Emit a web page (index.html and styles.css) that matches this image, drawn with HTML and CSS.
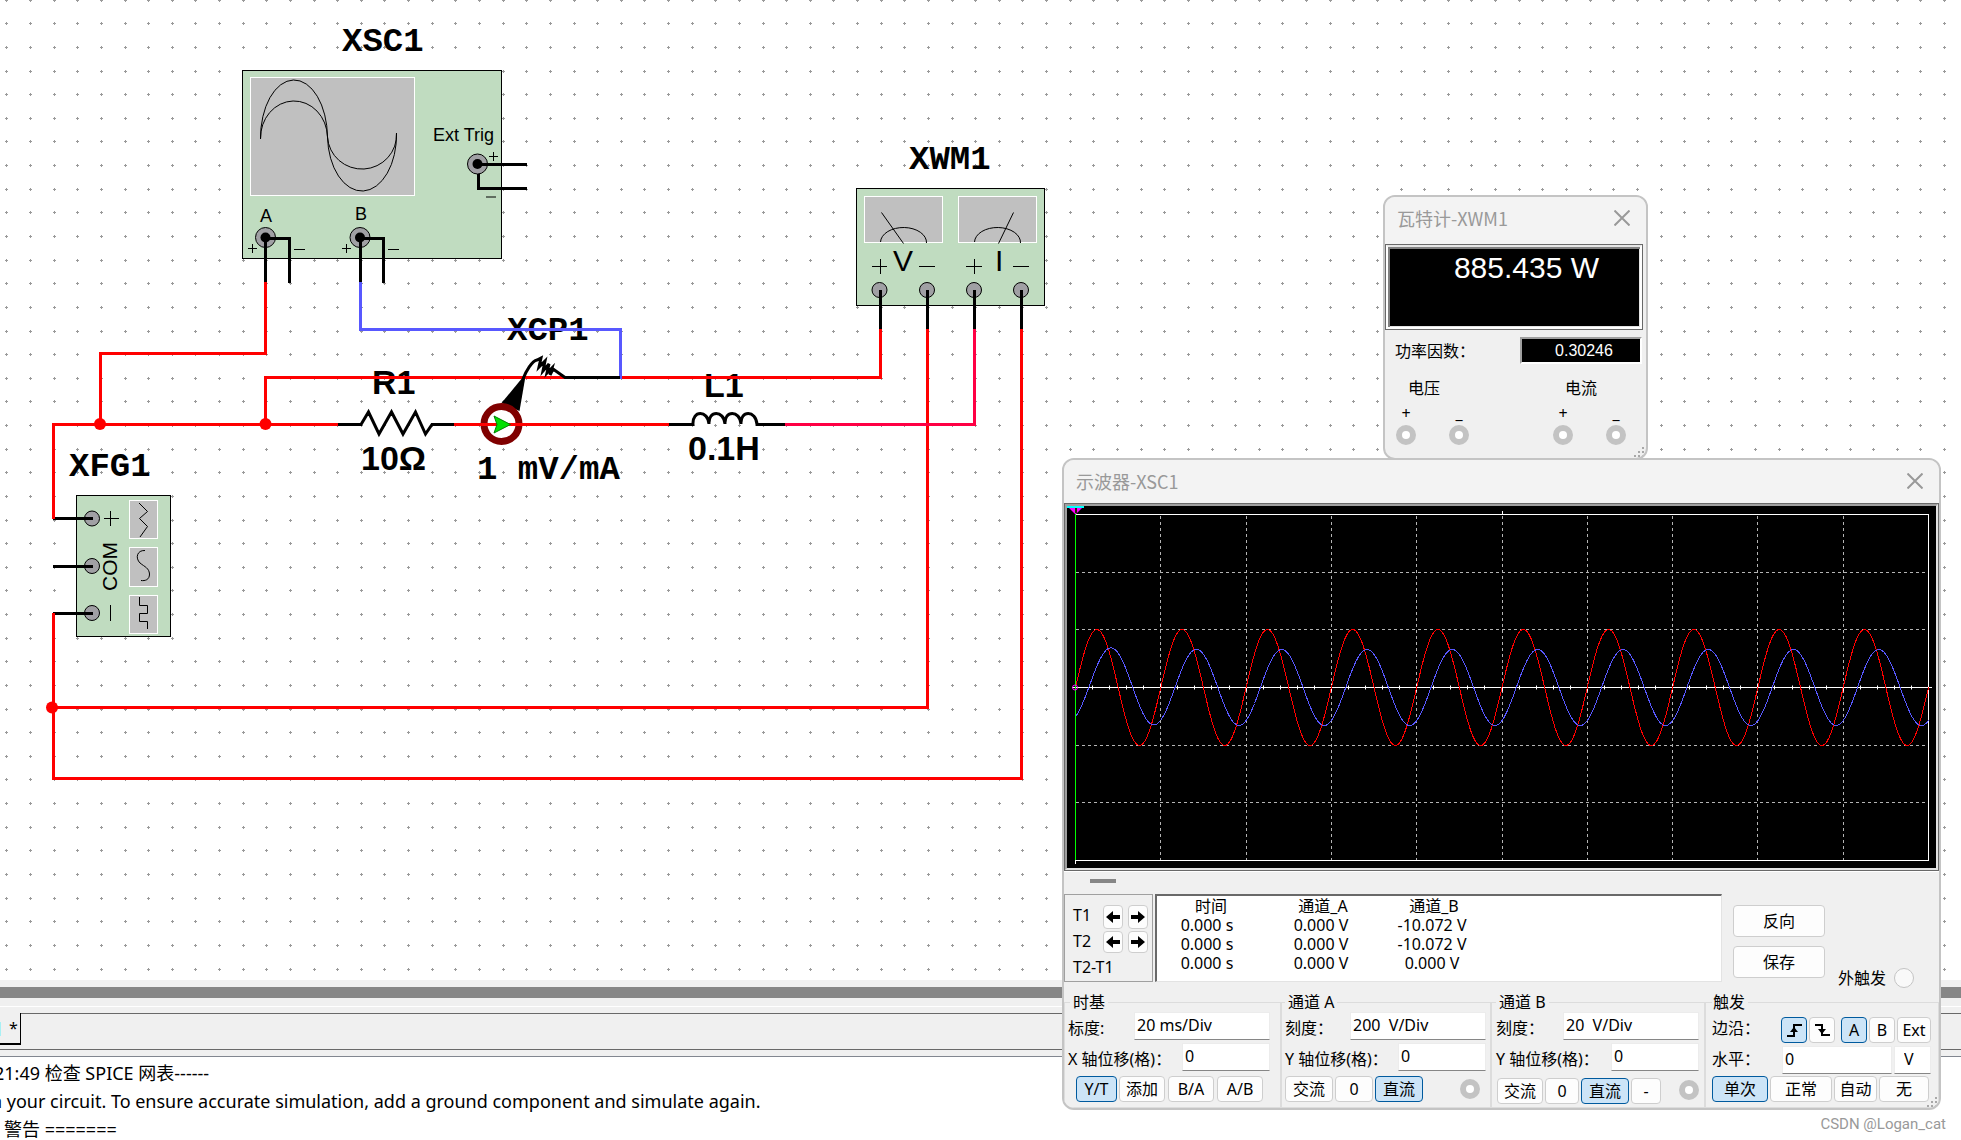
FILE: index.html
```html
<!DOCTYPE html>
<html lang="zh-CN">
<head>
<meta charset="utf-8">
<title>电路仿真</title>
<link rel="stylesheet" href="styles.css">
</head>
<body>
<div class="app">
  <main class="sheet">
    <svg class="schematic" width="1961" height="980">
      <path id="grid" class="grid"/>

      <g class="ref">
        <text x="342" y="51">XSC1</text>
        <text x="69" y="476">XFG1</text>
        <text x="909" y="169">XWM1</text>
        <text x="507" y="340">XCP1</text>
        <text x="477" y="479">1 mV/mA</text>
      </g>
      <g class="value">
        <text x="372" y="394">R1</text>
        <text x="361" y="470">10Ω</text>
        <text x="704" y="397">L1</text>
        <text x="688" y="460">0.1H</text>
      </g>

      <!-- oscilloscope -->
      <g>
        <rect class="body" x="242.5" y="70.5" width="259" height="188"/>
        <rect class="screen" x="250.5" y="77.5" width="164" height="118"/>
        <path class="thin" d="M260.5 139A33.5 58 0 0 1 327.5 137A34.5 56 0 0 0 396.500 133M260.500 139A33.500 37 0 0 1 327.500 137A34.500 34 0 0 0 396.500 133"/>
        <g class="small">
          <text x="433" y="141">Ext Trig</text>
          <text x="260" y="222">A</text>
          <text x="355" y="220">B</text>
        </g>
        <g class="jack"><circle cx="265.500" cy="237.500" r="10"/><circle cx="360" cy="237.500" r="10"/><circle cx="477.500" cy="164" r="10"/></g>
        <g class="core"><circle cx="265.500" cy="237.500" r="5"/><circle cx="360" cy="237.500" r="5"/><circle cx="477.500" cy="164" r="5"/></g>
        <path class="pin" d="M265.500 238V282M265.500 238.500H289.500V283M360.500 238V282M360.500 238.500H383.500V283M477.500 164.500H527M478.500 174V188.500H527"/>
        <path class="sign" d="M248 248.500h9M252.500 244v9M294 249.500h11M342 248.500h9M346.500 244v9M388 249.500h11M489 156.500h9M493.500 152v9M486 197h10"/>
      </g>

      <!-- function generator -->
      <g>
        <rect class="body" x="76.500" y="495.500" width="94" height="141"/>
        <rect class="screen" x="129.500" y="500.500" width="28" height="38"/>
        <rect class="screen" x="129.500" y="547.500" width="28" height="39"/>
        <rect class="screen" x="129.500" y="595.500" width="28" height="38"/>
        <path class="thin" d="M139 503L147.500 511.500L139.500 518.500L147.500 526.500L140 537M145 550.500C137 550 135 558 140 563C145 567 149 568 149.500 574C149.500 580 145 581 141 580.500M139.500 597V605.500H147.500V613.500H139.500V621.500H147.500V629M104 518.500h15M110.500 511v15M110.500 605v16"/>
        <g class="jack"><circle cx="92" cy="518.500" r="7.500"/><circle cx="92" cy="566" r="7.500"/><circle cx="92" cy="613" r="7.500"/></g>
        <path class="pin" d="M53 518.500H93M53 566.500H93M53 613.500H93"/>
        <text class="com" transform="translate(117 591) rotate(-90)">COM</text>
      </g>

      <!-- wattmeter -->
      <g>
        <rect class="body" x="856.500" y="188.500" width="188" height="117"/>
        <rect class="screen" x="864.500" y="196.500" width="78" height="46"/>
        <rect class="screen" x="958.500" y="196.500" width="78" height="46"/>
        <path class="thin" d="M881.500 212.500L903.500 243.500M880.500 242A23 15 0 0 1 926.500 243M1013.500 212.500L998.500 243.500M974.500 242A23 15 0 0 1 1020.500 243M872 266.500h15M880.500 259v15M919 266.500h16M966 266.500h16M974.500 259v15M1013 266.500h16"/>
        <g class="meter"><text x="893" y="271">V</text><text x="995" y="271">I</text></g>
        <g class="jack"><circle cx="879.500" cy="290" r="7.500"/><circle cx="927" cy="290" r="7.500"/><circle cx="974" cy="290" r="7.500"/><circle cx="1021" cy="290" r="7.500"/></g>
        <path class="pin" d="M880.500 290V329M927.500 290V329M974.500 290V329M1021.500 290V329"/>
      </g>

      <!-- wires -->
      <path class="wire hot" d="M265.500 282V353.500H100.500V424.500M53.500 519V424.500H338M265.500 424.500V377.500H880.500V329M53.500 613V778.500H1021.500V329M53.500 707.500H927.500V329"/>
      <path class="wire pink" d="M785 424.500H974.500V329"/>
      <path class="wire probe" d="M360.500 282V329.500H620.500V379"/>
      <g class="node"><circle cx="100" cy="424" r="6"/><circle cx="265.500" cy="424" r="6"/><circle cx="52" cy="707.500" r="6"/></g>

      <!-- resistor and inductor -->
      <path class="pin" d="M338 424.500H361L368.500 412L379 434L391.500 412L403 434L415.500 412L425.500 434L432 424.500H454M669 424.500H693C692 410 708 410 709 424C708 410 724 410 725 424C724 410 740 410 741 424C740 410 756 410 757 424.500H785"/>

      <!-- current probe -->
      <path d="M523 377L501.500 403L519.500 411L525 379Z"/>
      <path class="pin" d="M523 379C526 371 532 361 537 360L541 358L539 367L545 361L543 371L549 364L547 373L552 368L550 375L553 369L565 377.500H620"/>
      <circle class="ring" cx="501.500" cy="424" r="17.500"/>
      <path class="wire hot" d="M454 424.500H669"/>
      <path class="arrow" d="M494 416L510.500 424.500L494 433L497 424.500Z"/>
    </svg>
  </main>

  <footer class="dock">
    <div class="splitter"></div>
    <div class="tabs"><button class="tab" type="button">*</button></div>
    <div class="log">
      <p class="log-time">21:49 检查 SPICE 网表------</p>
      <p class="log-note">n your circuit. To ensure accurate simulation, add a ground component and simulate again.</p>
      <p class="log-warn">警告 =======</p>
    </div>
  </footer>

  <section class="window watt">
    <header class="titlebar"><h2>瓦特计-XWM1</h2>
      <button class="close" type="button" aria-label="关闭"><svg width="16" height="16"><path d="M0.500 0.500L15.500 15.500M15.500 0.500L0.500 15.500"/></svg></button></header>
    <output class="power">885.435 W</output>
    <div class="factor"><label for="pf">功率因数：</label><output id="pf">0.30246</output></div>
    <div class="terminals">
      <div class="pair"><span class="pair-name">电压</span>
        <label>+<input type="radio" name="vp" checked disabled></label>
        <label>_<input type="radio" name="vn" checked disabled></label></div>
      <div class="pair"><span class="pair-name">电流</span>
        <label>+<input type="radio" name="ip" checked disabled></label>
        <label>_<input type="radio" name="in" checked disabled></label></div>
    </div>
    <svg class="grip" width="11" height="11"><path d="M8 0h2v2h-2zM4 4h2v2h-2zM8 4h2v2h-2zM0 8h2v2h-2zM4 8h2v2h-2zM8 8h2v2h-2z"/></svg>
  </section>

  <section class="window scope">
    <header class="titlebar"><h2>示波器-XSC1</h2>
      <button class="close" type="button" aria-label="关闭"><svg width="16" height="16"><path d="M0.500 0.500L15.500 15.500M15.500 0.500L0.500 15.500"/></svg></button></header>
    <div class="bezel">
      <svg class="trace" viewBox="0 0 869 362">
        <path class="divs" d="M93.500 10V354M179.500 10V354M264.500 10V354M349.500 10V354M435.500 10V354M520.500 10V354M605.500 10V354M690.500 10V354M776.500 10V354M9 66.500H861M9 123.500H861M9 239.500H861M9 296.500H861"/>
        <path class="frame" d="M8 8.500H861M861.500 8V355M8 354.500H862M8.500 354V358M435.500 5V9M5 181.500H865"/>
        <path id="ticks" class="frame"/>
        <path id="wave-a" class="wave-a"/>
        <path id="wave-b" class="wave-b"/>
        <path class="cursor" d="M8.500 8V354"/>
        <path class="cursor-top" d="M0 0H17V2H0Z"/>
        <path class="cursor-head" d="M2 2H15L9 8H8Z"/>
        <path class="cursor-one" d="M8 2h2v5h-2z"/>
        <circle class="cursor-dot" cx="8" cy="181.500" r="2.500"/>
      </svg>
    </div>
    <div class="slider"><span></span></div>
    <div class="measure">
      <div class="cursors">
        <span>T1</span><button type="button" aria-label="T1 左移"><svg width="14" height="12"><path d="M0 6L7 0V4H14V8H7V12Z"/></svg></button><button type="button" aria-label="T1 右移"><svg width="14" height="12"><path d="M14 6L7 0V4H0V8H7V12Z"/></svg></button>
        <span>T2</span><button type="button" aria-label="T2 左移"><svg width="14" height="12"><path d="M0 6L7 0V4H14V8H7V12Z"/></svg></button><button type="button" aria-label="T2 右移"><svg width="14" height="12"><path d="M14 6L7 0V4H0V8H7V12Z"/></svg></button>
        <span class="delta">T2-T1</span>
      </div>
      <div class="readout">
        <table>
          <thead><tr><th>时间</th><th>通道_A</th><th>通道_B</th></tr></thead>
          <tbody>
            <tr><td>0.000 s</td><td>0.000 V</td><td>-10.072 V</td></tr>
            <tr><td>0.000 s</td><td>0.000 V</td><td>-10.072 V</td></tr>
            <tr><td>0.000 s</td><td>0.000 V</td><td>0.000 V</td></tr>
          </tbody>
        </table>
      </div>
      <div class="actions"><button type="button">反向</button><button type="button">保存</button></div>
      <label class="ext">外触发<input type="radio" name="ext" disabled></label>
    </div>
    <form class="groups">
      <fieldset class="base"><legend>时基</legend>
        <div class="row"><label for="tb">标度:</label><input id="tb" class="wide" value="20 ms/Div"></div>
        <div class="row"><label for="tx">X 轴位移(格)：</label><input id="tx" class="short" value="0"></div>
        <div class="keys"><button type="button" class="on w41">Y/T</button><button type="button" class="w46">添加</button><button type="button" class="w46">B/A</button><button type="button" class="w46">A/B</button></div>
      </fieldset>
      <fieldset class="cha"><legend>通道 A</legend>
        <div class="row"><label for="as">刻度：</label><input id="as" class="wide" value="200  V/Div"></div>
        <div class="row"><label for="ay">Y 轴位移(格)：</label><input id="ay" class="short" value="0"></div>
        <div class="keys"><button type="button" class="w48">交流</button><button type="button" class="w38">0</button><button type="button" class="on w48">直流</button><input type="radio" name="cha" checked disabled aria-label="通道 A"></div>
      </fieldset>
      <fieldset class="chb"><legend>通道 B</legend>
        <div class="row"><label for="bs">刻度：</label><input id="bs" class="wide" value="20  V/Div"></div>
        <div class="row"><label for="by">Y 轴位移(格)：</label><input id="by" class="short" value="0"></div>
        <div class="keys"><button type="button" class="w46">交流</button><button type="button" class="w34">0</button><button type="button" class="on w48">直流</button><button type="button" class="w30">-</button><input type="radio" name="chb" checked disabled aria-label="通道 B"></div>
      </fieldset>
      <fieldset class="trig"><legend>触发</legend>
        <div class="row"><span>边沿：</span>
          <div class="edges"><button type="button" class="on" aria-label="上升沿"><svg width="15" height="13"><path class="edge" d="M0 12H7V1H15"/><path d="M3 8L7 3L11 8Z"/></svg></button><button type="button" aria-label="下降沿"><svg width="15" height="13"><path class="edge" d="M0 1H7V11H15"/><path d="M3 5L7 10L11 5Z"/></svg></button><button type="button" class="on src">A</button><button type="button" class="src-b">B</button><button type="button" class="w34">Ext</button></div></div>
        <div class="row"><label for="lv">水平：</label><input id="lv" class="level" value="0"><input class="unit" aria-label="单位" value="V"></div>
        <div class="keys"><button type="button" class="on w56">单次</button><button type="button" class="w62">正常</button><button type="button" class="w43">自动</button><button type="button" class="w50">无</button></div>
      </fieldset>
    </form>
    <svg class="grip" width="11" height="11"><path d="M8 0h2v2h-2zM4 4h2v2h-2zM8 4h2v2h-2zM0 8h2v2h-2zM4 8h2v2h-2zM8 8h2v2h-2z"/></svg>
  </section>
  <p class="credit">CSDN @Logan_cat</p>
</div>
<script src="plot.js"></script>
</body>
</html>
```
FILE: styles.css
```css
* { box-sizing: border-box; }
body {
  margin: 0;
  background: #fff;
  color: #000;
  font: 16px/20px "Noto Sans", "Noto Sans CJK SC", sans-serif;
}
h2, p { margin: 0; font-weight: 400; }
button, input { font: inherit; color: inherit; }

.app {
  position: relative;
  display: flex;
  flex-direction: column;
  min-height: 100vh;
  overflow: hidden;
}
.sheet { flex: 1; overflow: hidden; }
.schematic { display: block; }

/* schematic */
.grid { stroke: #9a9a9a; fill: none; shape-rendering: crispEdges; }
.ref { font: bold 34px "Liberation Mono", "Courier New", monospace; }
.value { font: bold 34px "Liberation Sans", Arial, sans-serif; }
.small { font: 18px "Liberation Sans", Arial, sans-serif; }
.com { font: 21px "Liberation Sans", Arial, sans-serif; }
.meter { font: 30px "Liberation Sans", Arial, sans-serif; }
.body { fill: #c0dcc0; stroke: #000; }
.screen { fill: #c0c0c0; stroke: #fff; }
.thin { fill: none; stroke: #000; }
.sign { fill: none; stroke: #000; }
.pin { fill: none; stroke: #000; stroke-width: 3; }
.jack { fill: #a0a0a4; stroke: #000; }
.wire { fill: none; stroke-width: 3; }
.hot { stroke: #f00; }
.pink { stroke: #ff0044; }
.probe { stroke: #5858ff; }
.node { fill: #f00; }
.ring { fill: #fff; stroke: #800000; stroke-width: 7; }
.arrow { fill: #00e000; stroke: #008000; }

/* bottom dock */
.dock { background: #f0f0f0; }
.splitter {
  height: 26px;
  border: solid #f0f0f0;
  border-width: 7px 0 8px;
  background: #868686;
}
.tabs {
  display: flex;
  align-items: flex-start;
  height: 44px;
  margin-bottom: 6px;
  padding-top: 6px;
  border-top: 1px solid #fff;
  border-bottom: 1px solid #696969;
}
.tabs::after { content: ""; flex: 1; border-top: 1px solid #696969; }
.tab {
  width: 21px;
  height: 32px;
  padding: 0 0 0 7px;
  border: solid #000;
  border-width: 0 1px 2px 0;
  background: linear-gradient(#a8f0f4, #a8f0f4) 0 9px / 1px 14px no-repeat #f0f0f0;
}
.log {
  height: 84px;
  padding-top: 2px;
  overflow: hidden;
  border-top: 1px solid #828790;
  background: #fff;
  font-size: 18px;
  line-height: 28px;
  white-space: nowrap;
}
.log-time { margin-left: -6px; }
.log-note { margin-left: -9px; }
.log-warn { margin-left: 4px; }
.credit {
  position: absolute;
  right: 15px;
  bottom: 6px;
  color: #999;
  font: 15px/20px Roboto, sans-serif;
}

/* instrument windows */
.window {
  position: absolute;
  border: 2px solid #c4c4c4;
  border-radius: 12px;
  overflow: hidden;
  background: #f0f0f0;
}
.watt { left: 1383px; top: 195px; width: 265px; height: 265px; }
.scope { left: 1062px; top: 458px; width: 879px; }
.titlebar {
  display: flex;
  align-items: center;
  justify-content: space-between;
  height: 43px;
  padding: 0 16px 2px 12px;
  background: #f3f3f3;
  color: #999;
}
.titlebar h2 { font: 18px/24px "Noto Sans CJK SC", sans-serif; }
.close { display: flex; padding: 0; border: 0; background: none; }
.close path { stroke: #999; stroke-width: 2; fill: none; }
.grip { position: absolute; right: 1px; bottom: 0; fill: #a8a8a8; }

.watt .titlebar { height: 47px; padding-bottom: 6px; }
.power {
  display: block;
  width: 258px;
  height: 86px;
  padding-right: 41px;
  border: 3px solid #fff;
  border-top-color: #e6e6e6;
  outline: 1px solid #696969;
  outline-offset: -1px;
  box-shadow: inset 2px 2px #808080, inset -1px -1px #e3e3e3;
  background: #000;
  color: #fff;
  font: 30px/42px "Liberation Sans", Arial, sans-serif;
  text-align: right;
}
.factor {
  display: flex;
  align-items: center;
  justify-content: space-between;
  margin: 7px 4px 12px 10px;
}
.factor output {
  width: 122px;
  height: 27px;
  border: 2px solid;
  border-color: #a0a0a0 #fff #fff #a0a0a0;
  background: #000;
  color: #fff;
  font: 16px/24px "Liberation Sans", Arial, sans-serif;
  text-align: center;
  padding-left: 6px;
}
.terminals { display: flex; justify-content: space-between; padding: 0 20px 0 11px; }
.pair { display: grid; grid-template-columns: 20px 20px; column-gap: 33px; }
.pair-name { grid-column: 1 / 3; padding-left: 12px; line-height: 24px; }
.pair label {
  display: flex;
  flex-direction: column;
  align-items: center;
  padding-top: 2px;
  line-height: 23px;
}
input[type="radio"] {
  appearance: none;
  width: 20px;
  height: 20px;
  margin: 0;
  border: 1px solid #c4c4c4;
  border-radius: 50%;
  background: #f9f9f9;
}
input[type="radio"]:checked { border: 6px solid #c3c3c3; background: #fff; }

/* oscilloscope */
.bezel {
  border: 1px solid #696969;
  box-shadow: 0 1px #fff;
  background: #fff;
}
.trace {
  display: block;
  width: 873px;
  border: solid;
  border-width: 2px;
  border-color: #a0a0a0 #e3e3e3 #e3e3e3 #a0a0a0;
  background: #000;
  fill: none;
}
.divs { stroke: #b4b4b4; stroke-dasharray: 3 3; }
.frame { stroke: #fff; }
.wave-a, .wave-b { shape-rendering: crispEdges; }
.wave-a { stroke: #f00; }
.wave-b { stroke: #5858ff; }
.cursor { stroke: #0f0; }
.cursor-top { fill: #0ff; }
.cursor-head { fill: #f0f; }
.cursor-one { fill: #220; }
.cursor-dot { stroke: #f0f; }
.slider { height: 23px; padding: 8px 26px; }
.slider span { display: block; width: 26px; height: 4px; background: #868686; }

.window button:not(.close) {
  display: flex;
  align-items: center;
  justify-content: center;
  padding: 0;
  border: 1px solid #cecece;
  border-radius: 4px;
  background: #fdfdfd;
}
.window button.on { border-color: #005a9e; background: #cce4f7; }
.measure { display: flex; height: 88px; }
.cursors {
  display: grid;
  grid-template-columns: 25px 20px 20px;
  grid-template-rows: 24px 22px 24px;
  column-gap: 5px;
  row-gap: 2px;
  align-content: start;
  width: 89px;
  margin-right: 2px;
  padding: 10px 0 0 8px;
  border: 1px solid #a0a0a0;
}
.cursors .delta { grid-column: 1 / 4; line-height: 24px; }
.readout {
  width: 567px;
  padding-top: 1px;
  border: solid;
  border-width: 2px 1px 1px 2px;
  border-color: #696969 #e3e3e3 #e3e3e3 #696969;
  background: #fff;
}
.readout table { border-collapse: collapse; table-layout: fixed; width: 326px; }
.readout th, .readout td {
  width: 98px;
  padding: 0;
  font-weight: 400;
  line-height: 19px;
  text-align: center;
  white-space: nowrap;
}
.readout td { padding-right: 4px; }
.readout th:nth-child(1) { width: 104px; padding-left: 4px; }
.readout th:nth-child(2) { width: 124px; }
.actions { display: flex; flex-direction: column; gap: 9px; padding: 11px 0 0 11px; }
.actions button { width: 92px; height: 32px; }
.ext { display: flex; gap: 8px; align-self: flex-end; margin: 0 0 -6px 13px; }

.groups {
  display: grid;
  grid-template-columns: 217fr 210fr 214fr 234fr;
  margin-top: 10px;
}
fieldset {
  min-width: 0;
  height: 116px;
  margin: 0;
  padding: 0 10px 0 3px;
  border: 1px solid #dcdcdc;
}
legend { margin-left: 2px; padding: 0 3px; }
.cha { padding-right: 4px; }
.cha legend, .chb legend { margin-left: 0; }
.chb { padding: 0 5px 0 4px; }
.trig { padding: 0 7px 0 6px; }
.trig legend { margin-left: 0; padding-left: 1px; }
.row { display: flex; align-items: center; height: 28px; margin-bottom: 3px; white-space: nowrap; }
.row > label, .row > span { padding-top: 4px; }
.row input {
  height: 28px;
  margin-left: auto;
  padding: 0 3px 2px 2px;
  border: 1px solid #ececec;
  border-bottom-color: #868686;
  background: #fff;
  white-space: pre;
}
.wide { width: 136px; }
.short { width: 88px; }
.row .level { width: 110px; margin-top: 6px; }
.row .unit { width: 37px; margin: 6px 0 0 2px; padding-left: 9px; }
.keys { display: flex; gap: 2px; margin-top: 5px; }
.keys button { height: 26px; }
.keys input { margin: 3px 6px 0 auto; }
.base .keys { padding-left: 8px; }
.base .w46 + .w46 { margin-left: 1px; }
.chb .keys { padding-left: 1px; margin-top: 7px; }
.chb .keys input { margin: 2px 0 0 auto; }
.edges { display: flex; gap: 2px; margin: 8px 0 0 auto; }
.edges button { width: 26px; height: 26px; }
.edges .src { margin-left: 4px; }
.edge { fill: none; stroke: #000; stroke-width: 2; }
.w30 { width: 30px; }
.w34, .edges .w34 { width: 34px; }
.w38 { width: 38px; }
.w41 { width: 41px; }
.w43 { width: 43px; }
.w46 { width: 46px; }
.w48 { width: 48px; }
.w50 { width: 50px; }
.w56 { width: 56px; }
.w62 { width: 62px; }
```
FILE: plot.js
```js
// Schematic grid: one small cross per grid point.
let grid = "";
for (let row = 0; row < 42; row++) {
  const y = Math.round(row * 23.63 - 0.3);
  for (let col = 0; col < 83; col++) {
    const x = Math.round(col * 23.63 + 6.4);
    grid += `M${x - 1} ${y + 0.5}h3M${x + 0.5} ${y - 1}v3`;
  }
}
document.getElementById("grid").setAttribute("d", grid);

// Time axis ticks, five per division.
const period = 85.3, left = 8.5, mid = 181.5;
let ticks = "";
for (let i = 0; i <= 50; i++) {
  const x = Math.floor(left + i * period / 5) + 0.5;
  const h = i % 5 ? 2 : 4;
  ticks += `M${x} ${mid - h}V${mid + h}`;
}
document.getElementById("ticks").setAttribute("d", ticks);

// Channel traces.
function trace(f) {
  let d = "";
  for (let t = 0; t <= 853; t += 1) {
    d += `${t ? "L" : "M"}${left + t} ${(mid - f(t)).toFixed(1)}`;
  }
  return d;
}
const w = 2 * Math.PI / period;
document.getElementById("wave-a").setAttribute("d", trace(t => 58 * Math.sin(w * t)));
document.getElementById("wave-b").setAttribute("d",
  trace(t => 38 * Math.sin(w * (t - 14.3)) + 4 * Math.exp(-t / 40)));
```
